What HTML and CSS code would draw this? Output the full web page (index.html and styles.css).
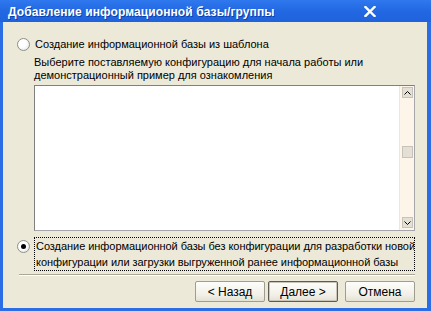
FILE: index.html
```html
<!DOCTYPE html>
<html lang="ru">
<head>
  <meta charset="UTF-8">
  <title>Добавление информационной базы/группы</title>
  <link rel="stylesheet" href="styles.css">
</head>
<body>
  <div class="window">
    <div class="titlebar">
      <span class="title">Добавление информационной базы/группы</span>
      <svg class="close" width="12" height="11" viewBox="0 0 12 11">
        <path d="M1.5 1 L10.5 10 M10.5 1 L1.5 10" stroke="#fff" stroke-width="2.4" stroke-linecap="square"/>
      </svg>
    </div>
    <div class="client">
      <label class="option">
        <span class="radio"></span>
        <span class="option-text">Создание информационной базы из шаблона</span>
      </label>
      <div class="template">
        <p class="hint">Выберите поставляемую конфигурацию для начала работы или<br>демонстрационный пример для ознакомления</p>
        <div class="listbox">
          <div class="list-area"></div>
          <div class="scrollbar">
            <div class="sb-btn">
              <svg width="7" height="4" viewBox="0 0 7 4"><path d="M0.5 3.5 L3.5 0.5 L6.5 3.5" fill="none" stroke="#000" stroke-width="1"/></svg>
            </div>
            <div class="sb-track">
              <div class="sb-thumb"></div>
            </div>
            <div class="sb-btn">
              <svg width="7" height="4" viewBox="0 0 7 4"><path d="M0.5 0.5 L3.5 3.5 L6.5 0.5" fill="none" stroke="#000" stroke-width="1"/></svg>
            </div>
          </div>
        </div>
      </div>
      <label class="option option-checked">
        <span class="radio checked"></span>
        <span class="option-text focused">Создание информационной базы без конфигурации для разработки новой<br>конфигурации или загрузки выгруженной ранее информационной базы</span>
      </label>
      <div class="separator"></div>
      <div class="buttons">
        <button class="btn">&lt; Назад</button>
        <button class="btn default">Далее &gt;</button>
        <button class="btn cancel">Отмена</button>
      </div>
    </div>
  </div>
</body>
</html>
```

FILE: styles.css
```css
body {
  margin: 0;
  font-family: "Liberation Sans", Arial, sans-serif;
  font-size: 11px;
  color: #000;
}
.window {
  width: 431px;
  height: 311px;
  display: flex;
  flex-direction: column;
  background: #2a6de4;
  box-sizing: border-box;
  overflow: hidden;
}
.titlebar {
  height: 22px;
  flex: none;
  display: flex;
  align-items: center;
  justify-content: space-between;
  padding: 0 55px 0 8px;
  background: linear-gradient(180deg, #2f78ee 0%, #2268e2 50%, #1f62dc 100%);
}
.title {
  color: #fff;
  font-weight: bold;
  font-size: 12px;
  letter-spacing: 0.1px;
  text-shadow: 1px 1px 0 #0d3fa8;
  padding-top: 1px;
}
.close {
  display: block;
  margin-top: 1px;
}
.client {
  flex: 1;
  margin: 0 4px 3px 3px;
  background: #ece9d8;
  padding: 16px 12px 0 14px;
  display: flex;
  flex-direction: column;
}
.option {
  display: flex;
  align-items: flex-start;
  gap: 5px;
}
.radio {
  flex: none;
  width: 13px;
  height: 13px;
  border-radius: 50%;
  box-sizing: border-box;
  border: 1px solid #8e8f8f;
  background: radial-gradient(circle at 40% 40%, #ffffff 40%, #dcdcd4 100%);
  position: relative;
}
.radio.checked::after {
  content: "";
  position: absolute;
  left: 3px;
  top: 3px;
  width: 5px;
  height: 5px;
  border-radius: 50%;
  background: #000;
}
.option-text {
  line-height: 13px;
  white-space: nowrap;
}
.template {
  margin-left: 17px;
  display: flex;
  flex-direction: column;
}
.hint {
  margin: 5px 0 3px;
  line-height: 13px;
}
.listbox {
  height: 146px;
  display: flex;
  background: #fff;
  border: 1px solid #a7a6aa;
  border-top-color: #808080;
  border-left-color: #808080;
  box-sizing: border-box;
}
.list-area {
  flex: 1;
}
.scrollbar {
  width: 15px;
  display: flex;
  flex-direction: column;
  background: #fdf5ea;
  border-left: 1px solid #ece6dc;
  padding: 1px 1px 2px 2px;
  box-sizing: border-box;
}
.sb-btn {
  height: 11px;
  flex: none;
  display: flex;
  align-items: center;
  justify-content: center;
  background: #e4e0d6;
  border: 1px solid #c7c3b8;
  box-sizing: border-box;
}
.sb-track {
  flex: 1;
  display: flex;
  flex-direction: column;
  justify-content: center;
  padding-bottom: 12px;
}
.sb-thumb {
  height: 12px;
  background: #e4e0d6;
  border: 1px solid #c7c3b8;
  box-sizing: border-box;
}
.option-checked {
  margin-top: 6px;
}
.option-checked .radio {
  margin-top: 3px;
}
.focused {
  flex: 1;
  margin-left: -1px;
  padding: 0 0 0 1px;
  border: 1px dotted #000;
  line-height: 16px;
  letter-spacing: -0.05px;
  overflow: hidden;
}
.separator {
  margin: 3px 0 0 2px;
  height: 1px;
  background: #aca899;
  border-bottom: 1px solid #fff;
}
.buttons {
  display: flex;
  justify-content: flex-end;
  margin-top: 5px;
}
.btn {
  width: 70px;
  height: 21px;
  padding: 0;
  font-family: "Liberation Sans", Arial, sans-serif;
  font-size: 12px;
  color: #000;
  background: linear-gradient(180deg, #fdfdfb 0%, #f1efe6 70%, #e3e0d4 100%);
  border: 1px solid #a09c8e;
  border-radius: 2px;
  margin-left: 3px;
}
.btn.default {
  border-color: #5e5b52;
  box-shadow: inset 0 0 0 1px #c9c5b8;
}
.btn.cancel {
  margin-left: 7px;
}
```
